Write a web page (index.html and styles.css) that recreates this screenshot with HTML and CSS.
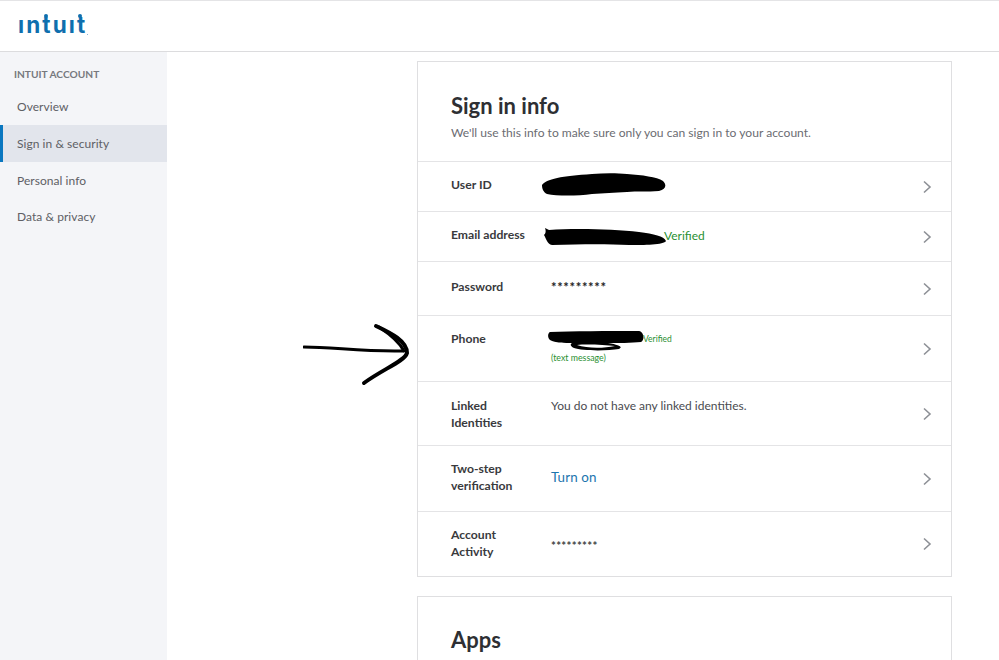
FILE: index.html
```html
<!DOCTYPE html>
<html lang="en">
<head>
<meta charset="utf-8">
<title>Sign in info</title>
<link rel="stylesheet" href="styles.css">
</head>
<body>
<header class="topbar">
  <span class="logo">ıntuıt<i class="dot dot-a"></i><i class="dot dot-b"></i><i class="mark"></i></span>
</header>
<div class="layout">
  <aside class="sidebar">
    <div class="side-title">INTUIT ACCOUNT</div>
    <nav class="side-nav">
      <a class="side-link">Overview</a>
      <a class="side-link active">Sign in &amp; security</a>
      <a class="side-link">Personal info</a>
      <a class="side-link">Data &amp; privacy</a>
    </nav>
  </aside>
  <main class="main">
    <section class="card">
      <div class="card-head">
        <h1>Sign in info</h1>
        <p>We'll use this info to make sure only you can sign in to your account.</p>
      </div>
      <div class="row h50">
        <div class="label">User ID</div>
        <div class="value">
          <svg class="scribble s-user" viewBox="0 0 124 23"><path d="M0 12C4 6 20 3 50 1C62 0 75 0 85 1C100 2 115 4 121 8C125 12 124 16 117 18C105 19 95 18 85 19C72 20 62 20 50 21C35 23 15 23 5 21C1 19 0 15 0 12Z" fill="#000"/></svg>
        </div>
        <svg class="chev" viewBox="0 0 10 14"><path d="M2 1.500L8 7L2 12.500" fill="none" stroke="#8d9096" stroke-width="1.600"/></svg>
      </div>
      <div class="row h50">
        <div class="label">Email address</div>
        <div class="value">
          <svg class="scribble s-email" viewBox="0 0 122 17"><path d="M1 0L5 2C30 0 70 1 95 4C110 6 120 8 122 13C120 17 100 17 85 17C65 16 40 16 8 17C3 16 2 10 0 7C2 5 2 3 1 0Z" fill="#000"/></svg>
          <span class="verified">Verified</span>
        </div>
        <svg class="chev" viewBox="0 0 10 14"><path d="M2 1.500L8 7L2 12.500" fill="none" stroke="#8d9096" stroke-width="1.600"/></svg>
      </div>
      <div class="row h54">
        <div class="label pad-16">Password</div>
        <div class="value stars">*********</div>
        <svg class="chev" viewBox="0 0 10 14"><path d="M2 1.500L8 7L2 12.500" fill="none" stroke="#8d9096" stroke-width="1.600"/></svg>
      </div>
      <div class="row h66">
        <div class="label">Phone</div>
        <div class="value value-phone">
          <div class="phone-line">
            <svg class="scribble s-phone" viewBox="0 0 97 20"><path d="M3 1C25 0 60 0 92 0C97 1 98 9 94 11C85 12 70 12 61 12C73 14 76 16 72 18C60 20 35 20 27 17C23 15 23 13 25 12C18 12 8 12 3 9C0 6 1 2 3 1Z" fill="#000"/><path d="M30 14C40 13 58 14 68 15C56 17.500 40 17.500 30 14Z" fill="#fff"/></svg>
            <span class="verified small">Verified</span>
          </div>
          <div class="verified small sub">(text message)</div>
        </div>
        <svg class="chev" viewBox="0 0 10 14"><path d="M2 1.500L8 7L2 12.500" fill="none" stroke="#8d9096" stroke-width="1.600"/></svg>
      </div>
      <div class="row h64">
        <div class="label pad-15">Linked<br>Identities</div>
        <div class="value plain">You do not have any linked identities.</div>
        <svg class="chev" viewBox="0 0 10 14"><path d="M2 1.500L8 7L2 12.500" fill="none" stroke="#8d9096" stroke-width="1.600"/></svg>
      </div>
      <div class="row h66">
        <div class="label">Two-step<br>verification</div>
        <div class="value turn-on">Turn on</div>
        <svg class="chev" viewBox="0 0 10 14"><path d="M2 1.500L8 7L2 12.500" fill="none" stroke="#8d9096" stroke-width="1.600"/></svg>
      </div>
      <div class="row h65">
        <div class="label">Account<br>Activity</div>
        <div class="value stars small-stars">*********</div>
        <svg class="chev" viewBox="0 0 10 14"><path d="M2 1.500L8 7L2 12.500" fill="none" stroke="#8d9096" stroke-width="1.600"/></svg>
      </div>
    </section>
    <section class="card card-apps">
      <h2>Apps</h2>
    </section>
  </main>
</div>
<svg class="arrow" viewBox="0 0 110 64"><path d="M1 24C30 24 60 29 100 28" fill="none" stroke="#000" stroke-width="3" stroke-linecap="round"/><path d="M73 3C88 10 104 18 104 30C102 38 80 46 61 60" fill="none" stroke="#000" stroke-width="4" stroke-linecap="round"/><path d="M76 4C88 12 97 20 101 28" fill="none" stroke="#000" stroke-width="3" stroke-linecap="round"/></svg>
</body>
</html>
```

FILE: styles.css
```css
* { box-sizing: border-box; }
html, body { margin: 0; padding: 0; height: 660px; overflow: hidden; background: #fff; }
body { font-family: "Lato", "Open Sans", sans-serif; color: #393a3d; position: relative; }

.topbar { height: 52px; border-top: 1px solid #e4e4e6; border-bottom: 1px solid #dcdcde; padding: 10px 0 0 18px; }
.logo { position: relative; display: inline-block; font-family: "Inter", sans-serif; font-weight: 700; font-size: 22.500px; line-height: 27px; color: #0f6fae; letter-spacing: 2.100px; }
.dot { position: absolute; width: 4px; height: 4px; border-radius: 50%; background: #0f6fae; top: 3px; }
.dot-a { left: 26px; }
.dot-b { left: 60px; }
.mark { position: absolute; width: 1px; height: 1px; background: #8fb6d4; right: -1px; bottom: 3px; }

.layout { display: flex; height: 608px; }
.sidebar { width: 167px; flex: none; background: #f4f5f8; padding-top: 16px; }
.side-title { font-size: 10.200px; font-weight: 700; color: #77797e; padding-left: 14px; line-height: 13px; }
.side-nav { display: flex; flex-direction: column; margin-top: 7.500px; }
.side-link { display: flex; align-items: center; height: 36.700px; padding-left: 17px; font-size: 12px; letter-spacing: 0.050px; color: #5e6065; }
.side-link.active { background: #e2e5ec; border-left: 3px solid #0a77c0; padding-left: 14px; }

.main { flex: 1; padding: 9px 0 0 250px; }
.card { width: 535px; border: 1px solid #dfdfe1; }
.card-head { height: 99px; padding: 31px 0 0 33px; }
h1 { margin: 0; font-size: 22px; line-height: 26px; font-weight: 700; color: #2e2f33; }
.card-head p { margin: 6px 0 0; font-size: 12.100px; line-height: 16px; color: #6b6c72; }

.row { display: flex; align-items: flex-start; padding: 0 19px 0 33px; border-top: 1px solid #e4e4e6; }
.h50 { height: 50px; }
.h54 { height: 54px; }
.h66 { height: 66px; }
.h64 { height: 64px; }
.h65 { height: 65px; }
.label { width: 100px; flex: none; padding-top: 14px; font-size: 12.200px; line-height: 17px; font-weight: 700; color: #393a3d; }
.pad-16 { padding-top: 16px; }
.pad-15 { padding-top: 15px; }
.value { flex: 1; display: flex; align-items: center; font-size: 12px; }
.chev { width: 10px; height: 14px; flex: none; align-self: center; }

.scribble { display: block; flex: none; }
.s-user { width: 124px; height: 23px; margin: 11px 0 0 -9px; }
.s-email { width: 122px; height: 17px; margin: 16px 0 0 -7px; }
.s-phone { width: 97px; height: 20px; margin: 0 0 0 -4px; }
.verified { color: #2a8f32; font-size: 12px; line-height: 16px; }
.s-email + .verified { margin: 15px 0 0 -2px; }
.small { font-size: 8.500px; line-height: 11px; }
.value-phone { display: block; padding-top: 15px; }
.phone-line { display: flex; align-items: flex-start; }
.phone-line .small { margin: 3px 0 0 -1px; }
.sub { margin-top: 1px; font-size: 8.800px; }
.stars { padding-top: 18px; font-size: 13px; letter-spacing: 0.650px; line-height: 14px; color: #222; font-weight: 700; }
.small-stars { padding-top: 27px; font-size: 11.500px; font-weight: 700; letter-spacing: 0.300px; color: #444; }
.plain { padding-top: 15px; line-height: 17px; color: #4a4b50; }
.turn-on { padding-top: 22px; font-size: 13.400px; letter-spacing: 0.100px; line-height: 18px; color: #1b75ae; }

.card-apps { margin-top: 19px; height: 80px; padding: 30px 0 0 33px; }
h2 { margin: 0; font-size: 22px; line-height: 26px; font-weight: 700; color: #2e2f33; }

.arrow { position: absolute; left: 303px; top: 323px; width: 110px; height: 64px; }
```
